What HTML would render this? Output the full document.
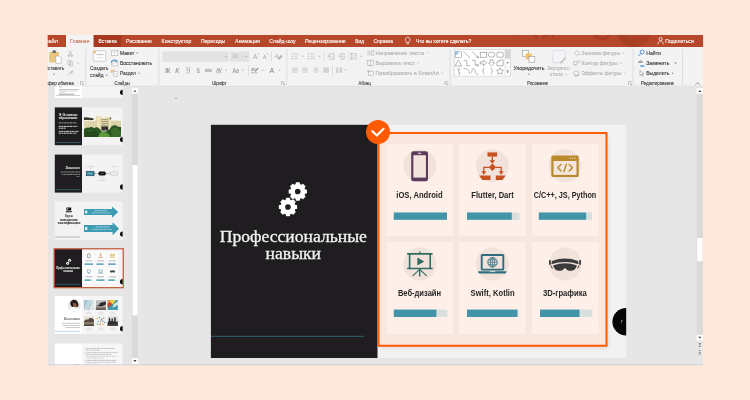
<!DOCTYPE html>
<html lang="ru">
<head>
<meta charset="utf-8">
<title>PowerPoint</title>
<style>
html,body{margin:0;padding:0;}
body{width:750px;height:400px;overflow:hidden;background:#FEE8DC;font-family:"Liberation Sans",sans-serif;}
svg{display:block;position:absolute;left:0;top:0;will-change:transform;}
text{white-space:pre;}
</style>
</head>
<body>
<svg width="750" height="400" viewBox="0 0 750 400">
<defs>
<clipPath id="win"><rect x="47.7" y="35" width="655.4" height="330.6"/></clipPath>
<clipPath id="tabbar"><rect x="47.7" y="35" width="655.4" height="12"/></clipPath>
<clipPath id="bigc"><circle cx="634" cy="29.5" r="17.6"/></clipPath>
<filter id="b3" x="-1%" y="-5%" width="102%" height="110%"><feGaussianBlur stdDeviation="0.28"/></filter>
<filter id="b4" x="-5%" y="-5%" width="110%" height="110%"><feGaussianBlur stdDeviation="0.35"/></filter>
<clipPath id="ph2"><rect x="83.7" y="116" width="37.5" height="21"/></clipPath>
<filter id="sh" x="-10%" y="-10%" width="120%" height="120%"><feGaussianBlur stdDeviation="2"/></filter>
</defs>
<g clip-path="url(#win)">
<rect x="47.00" y="35.00" width="657.00" height="331.00" fill="#E6E6E6" />
<rect x="47.00" y="35.00" width="657.00" height="12.00" fill="#B7472A" />
<g clip-path="url(#tabbar)">
<circle cx="602" cy="31.5" r="7.6" fill="none" stroke="#5a1500" stroke-width="3.2" opacity="0.16"/>
<circle cx="634" cy="29.5" r="17.6" fill="#5a1500" opacity="0.17"/>
<g clip-path="url(#bigc)" stroke="#B7472A" stroke-width="1.1" opacity="0.75">
<line x1="626.0" y1="33" x2="639.0" y2="48"/>
<line x1="629.3" y1="33" x2="642.3" y2="48"/>
<line x1="632.6" y1="33" x2="645.6" y2="48"/>
<line x1="635.9" y1="33" x2="648.9" y2="48"/>
<line x1="639.2" y1="33" x2="652.2" y2="48"/>
<line x1="642.5" y1="33" x2="655.5" y2="48"/>
<line x1="645.8" y1="33" x2="658.8" y2="48"/>
</g>
<path d="M535 35l2 3M543.5 35v3.600M546 35v3M552 35l1.600 2.600M514 35l1 2" stroke="#5a1500" stroke-width="1.6" opacity="0.22" fill="none"/>
</g>
<rect x="93.50" y="35.00" width="27.50" height="12.00" fill="#A6381F" />
<rect x="66.00" y="35.00" width="27.50" height="12.20" fill="#F3F3F3" />
<rect x="47.00" y="47.00" width="657.00" height="39.00" fill="#F3F3F3" />
<line x1="48.00" y1="86.10" x2="703.00" y2="86.10" stroke="#DADADA" stroke-width="0.6" />
<text x="44.00" y="42.94" font-family="Liberation Sans" font-size="5.4" font-weight="normal" font-style="normal" fill="#FFFFFF" textLength="14.00" lengthAdjust="spacingAndGlyphs"  stroke="#FFFFFF" stroke-width="0.12">Файл</text>
<text x="70.00" y="42.94" font-family="Liberation Sans" font-size="5.4" font-weight="normal" font-style="normal" fill="#BF5438" textLength="19.50" lengthAdjust="spacingAndGlyphs" stroke="none">Главная</text>
<text x="98.60" y="42.94" font-family="Liberation Sans" font-size="5.4" font-weight="normal" font-style="normal" fill="#FFFFFF" textLength="18.00" lengthAdjust="spacingAndGlyphs"  stroke="#FFFFFF" stroke-width="0.12">Вставка</text>
<text x="126.00" y="42.94" font-family="Liberation Sans" font-size="5.4" font-weight="normal" font-style="normal" fill="#FFFFFF" textLength="25.90" lengthAdjust="spacingAndGlyphs"  stroke="#FFFFFF" stroke-width="0.12">Рисование</text>
<text x="161.60" y="42.94" font-family="Liberation Sans" font-size="5.4" font-weight="normal" font-style="normal" fill="#FFFFFF" textLength="29.70" lengthAdjust="spacingAndGlyphs"  stroke="#FFFFFF" stroke-width="0.12">Конструктор</text>
<text x="200.70" y="42.94" font-family="Liberation Sans" font-size="5.4" font-weight="normal" font-style="normal" fill="#FFFFFF" textLength="24.60" lengthAdjust="spacingAndGlyphs"  stroke="#FFFFFF" stroke-width="0.12">Переходы</text>
<text x="235.10" y="42.94" font-family="Liberation Sans" font-size="5.4" font-weight="normal" font-style="normal" fill="#FFFFFF" textLength="24.90" lengthAdjust="spacingAndGlyphs"  stroke="#FFFFFF" stroke-width="0.12">Анимация</text>
<text x="269.30" y="42.94" font-family="Liberation Sans" font-size="5.4" font-weight="normal" font-style="normal" fill="#FFFFFF" textLength="26.30" lengthAdjust="spacingAndGlyphs"  stroke="#FFFFFF" stroke-width="0.12">Слайд-шоу</text>
<text x="304.90" y="42.94" font-family="Liberation Sans" font-size="5.4" font-weight="normal" font-style="normal" fill="#FFFFFF" textLength="40.90" lengthAdjust="spacingAndGlyphs"  stroke="#FFFFFF" stroke-width="0.12">Рецензирование</text>
<text x="355.20" y="42.94" font-family="Liberation Sans" font-size="5.4" font-weight="normal" font-style="normal" fill="#FFFFFF" textLength="8.80" lengthAdjust="spacingAndGlyphs"  stroke="#FFFFFF" stroke-width="0.12">Вид</text>
<text x="373.40" y="42.94" font-family="Liberation Sans" font-size="5.4" font-weight="normal" font-style="normal" fill="#FFFFFF" textLength="19.60" lengthAdjust="spacingAndGlyphs"  stroke="#FFFFFF" stroke-width="0.12">Справка</text>
<path d="M407.7 37.2a2.4 2.4 0 0 1 1.3 4.4v1.2h-2.6v-1.2a2.4 2.4 0 0 1 1.3-4.4zM406.6 43.9h2.2" fill="none" stroke="#FFFFFF" stroke-width="0.7" />
<text x="416.00" y="42.91" font-family="Liberation Sans" font-size="5.3" font-weight="normal" font-style="normal" fill="#FFFFFF" textLength="55.20" lengthAdjust="spacingAndGlyphs" stroke="#fff" stroke-width="0.15">Что вы хотите сделать?</text>
<path d="M660.6 37.4a1.6 1.6 0 1 1 0 3.2a1.6 1.6 0 1 1 0-3.2zM657.9 44.4c0-2.2 1.2-3.3 2.7-3.3s2.7 1.1 2.7 3.3" fill="none" stroke="#FFFFFF" stroke-width="0.7" />
<text x="665.30" y="42.94" font-family="Liberation Sans" font-size="5.4" font-weight="normal" font-style="normal" fill="#FFFFFF" textLength="28.40" lengthAdjust="spacingAndGlyphs"  stroke="#FFFFFF" stroke-width="0.12">Поделиться</text>
<g filter="url(#b3)">
<rect x="49.20" y="52.00" width="9.80" height="10.40" fill="#E9C67D" rx="0.8"/>
<rect x="52.20" y="50.80" width="4.00" height="2.20" fill="#707070" rx="0.7"/>
<rect x="53.30" y="50.10" width="1.80" height="1.30" fill="#707070" rx="0.5"/>
<path d="M55.8 56.000h3.600l1.800 1.800v5.600h-5.400z" fill="#fff" stroke="#9a9a9a" stroke-width="0.5" />
<text x="45.00" y="69.94" font-family="Liberation Sans" font-size="5.4" font-weight="normal" font-style="normal" fill="#383838" textLength="19.20" lengthAdjust="spacingAndGlyphs"  stroke="#383838" stroke-width="0.12">Вставить</text>
<path d="M52.90 73.65L55.10 73.65L54.00 74.97Z" fill="#666" stroke="none" stroke-width="1" />
<path d="M68.8 50.6l3 4.2M71.8 50.6l-3 4.2" fill="none" stroke="#ABABAB" stroke-width="0.6" />
<circle cx="68.9" cy="55.6" r="0.9" fill="none" stroke="#9a9a9a" stroke-width="0.6"/><circle cx="71.7" cy="55.6" r="0.9" fill="none" stroke="#9a9a9a" stroke-width="0.6"/>
<path d="M67.8 60.4h3v4h-3zM69.6 61.8h3v4h-3z" fill="#F3F3F3" stroke="#ABABAB" stroke-width="0.55" />
<path d="M77.20 62.70L79.20 62.70L78.20 63.90Z" fill="#B9B9B9" stroke="none" stroke-width="1" />
<path d="M68 75.2l2.6-2.6M70.2 72l1.4 1.4l1.3-2.1z" fill="none" stroke="#ABABAB" stroke-width="0.7" />
<text x="42.90" y="85.19" font-family="Liberation Sans" font-size="5.4" font-weight="normal" font-style="normal" fill="#3a3a3a" textLength="30.80" lengthAdjust="spacingAndGlyphs"  stroke="#3a3a3a" stroke-width="0.12">Буфер обмена</text>
<path d="M80.5 81.7H83.5M80.5 81.7V84.7" fill="none" stroke="#8a8a8a" stroke-width="0.5" />
<path d="M81.7 82.9L83.5 84.7M83.5 83.4V84.7H82.2" fill="none" stroke="#8a8a8a" stroke-width="0.5" />
<line x1="85.80" y1="49.00" x2="85.80" y2="85.00" stroke="#D4D4D4" stroke-width="0.7" />
<rect x="93.30" y="50.80" width="12.40" height="10.40" fill="#fff" stroke="#B5B5B5" stroke-width="0.6" rx="0.8"/>
<path d="M94.7 49.900l0.600 1.300l1.400 0.150l-1.050 0.950l0.300 1.400l-1.250-0.700l-1.250 0.700l0.300-1.400l-1.050-0.950l1.400-0.150z" fill="#F0B860" stroke="none" stroke-width="1" />
<line x1="96.20" y1="54.50" x2="103.60" y2="54.50" stroke="#C9C9C9" stroke-width="1.3" />
<line x1="97.00" y1="57.80" x2="102.80" y2="57.80" stroke="#DADADA" stroke-width="1.0" />
<text x="89.90" y="69.94" font-family="Liberation Sans" font-size="5.4" font-weight="normal" font-style="normal" fill="#383838" textLength="18.40" lengthAdjust="spacingAndGlyphs"  stroke="#383838" stroke-width="0.12">Создать</text>
<text x="90.30" y="76.84" font-family="Liberation Sans" font-size="5.4" font-weight="normal" font-style="normal" fill="#383838" textLength="13.10" lengthAdjust="spacingAndGlyphs"  stroke="#383838" stroke-width="0.12">слайд</text>
<path d="M105.60 74.70L107.60 74.70L106.60 75.90Z" fill="#666" stroke="none" stroke-width="1" />
<rect x="111.30" y="50.50" width="6.70" height="5.20" fill="#D2D2D2" stroke="#B5B5B5" stroke-width="0.4"/>
<rect x="112.00" y="52.40" width="2.40" height="2.60" fill="#fff" />
<rect x="115.00" y="52.40" width="2.30" height="2.60" fill="#fff" />
<rect x="112.00" y="51.10" width="5.30" height="0.80" fill="#F5F5F5" />
<text x="120.00" y="54.84" font-family="Liberation Sans" font-size="5.4" font-weight="normal" font-style="normal" fill="#383838" textLength="14.40" lengthAdjust="spacingAndGlyphs"  stroke="#383838" stroke-width="0.12">Макет</text>
<path d="M136.20 52.50L138.20 52.50L137.20 53.70Z" fill="#777" stroke="none" stroke-width="1" />
<rect x="111.60" y="60.40" width="6.40" height="5.60" fill="#DDDDDD" stroke="#BEBEBE" stroke-width="0.4"/>
<rect x="113.00" y="63.20" width="4.20" height="2.00" fill="#F8F8F8" />
<path d="M111.4 62.800c0-1.800 1.200-2.800 2.800-2.800c1.400 0 2.200 0.600 2.600 1.400" fill="none" stroke="#2F86C6" stroke-width="1.0" />
<path d="M116.000 60.000l1.200 1.600l-1.900 0.200z" fill="#2F86C6" stroke="none" stroke-width="1" />
<text x="120.00" y="64.69" font-family="Liberation Sans" font-size="5.4" font-weight="normal" font-style="normal" fill="#383838" textLength="32.00" lengthAdjust="spacingAndGlyphs"  stroke="#383838" stroke-width="0.12">Восстановить</text>
<rect x="113.20" y="71.40" width="4.60" height="5.20" fill="#fff" stroke="#B0B0B0" stroke-width="0.5"/>
<line x1="114.00" y1="73.40" x2="117.00" y2="73.40" stroke="#CFCFCF" stroke-width="0.6" />
<line x1="114.00" y1="75.00" x2="117.00" y2="75.00" stroke="#CFCFCF" stroke-width="0.6" />
<path d="M111.4 70.400h3.200M111.400 70.400v2.400" fill="none" stroke="#F0A848" stroke-width="0.9" />
<line x1="111.60" y1="72.20" x2="113.20" y2="72.20" stroke="#E58A6A" stroke-width="0.6" />
<text x="120.00" y="75.04" font-family="Liberation Sans" font-size="5.4" font-weight="normal" font-style="normal" fill="#383838" textLength="15.70" lengthAdjust="spacingAndGlyphs"  stroke="#383838" stroke-width="0.12">Раздел</text>
<path d="M138.20 72.70L140.20 72.70L139.20 73.90Z" fill="#777" stroke="none" stroke-width="1" />
<text x="114.50" y="85.19" font-family="Liberation Sans" font-size="5.4" font-weight="normal" font-style="normal" fill="#3a3a3a" textLength="15.20" lengthAdjust="spacingAndGlyphs"  stroke="#3a3a3a" stroke-width="0.12">Слайды</text>
<line x1="158.90" y1="49.00" x2="158.90" y2="85.00" stroke="#D4D4D4" stroke-width="0.7" />
<rect x="162.30" y="51.50" width="66.50" height="10.20" fill="#E2E2E2" />
<path d="M224.75 56.22L227.05 56.22L225.90 57.60Z" fill="#b0b0b0" stroke="none" stroke-width="1" />
<rect x="230.20" y="51.50" width="19.10" height="10.20" fill="#E2E2E2" />
<text x="232.20" y="58.44" font-family="Liberation Sans" font-size="5.4" font-weight="normal" font-style="normal" fill="#BDBDBD" textLength="6.20" lengthAdjust="spacingAndGlyphs"  stroke="#BDBDBD" stroke-width="0.12">20</text>
<path d="M245.15 56.22L247.45 56.22L246.30 57.60Z" fill="#a5a5a5" stroke="none" stroke-width="1" />
<text x="253.20" y="59.28" font-family="Liberation Sans" font-size="6.6" font-weight="normal" font-style="normal" fill="#ABABAB" textLength="4.00" lengthAdjust="spacingAndGlyphs"  stroke="#ABABAB" stroke-width="0.12">A</text>
<path d="M257.6 54.2l0.9-1.1l0.9 1.1z" fill="#ABABAB" stroke="none" stroke-width="1" />
<text x="263.00" y="59.29" font-family="Liberation Sans" font-size="5.8" font-weight="normal" font-style="normal" fill="#ABABAB" textLength="3.40" lengthAdjust="spacingAndGlyphs"  stroke="#ABABAB" stroke-width="0.12">A</text>
<path d="M266.9 53.4l0.8 1l0.8-1z" fill="#ABABAB" stroke="none" stroke-width="1" />
<line x1="271.50" y1="51.50" x2="271.50" y2="61.50" stroke="#D4D4D4" stroke-width="0.7" />
<text x="275.00" y="58.36" font-family="Liberation Sans" font-size="6" font-weight="normal" font-style="normal" fill="#ABABAB" textLength="3.60" lengthAdjust="spacingAndGlyphs"  stroke="#ABABAB" stroke-width="0.12">A</text>
<path d="M277.6 58.6l3.6-3.6l1.2 1.2l-3.6 3.6z" fill="#b5b5b5" stroke="#ABABAB" stroke-width="0.4" />
<text x="165.00" y="72.58" font-family="Liberation Sans" font-size="6.6" font-weight="bold" font-style="normal" fill="#979797" textLength="5.20" lengthAdjust="spacingAndGlyphs"  stroke="#979797" stroke-width="0.12">Ж</text>
<text x="175.20" y="72.58" font-family="Liberation Sans" font-size="6.6" font-weight="normal" font-style="italic" fill="#979797" textLength="4.00" lengthAdjust="spacingAndGlyphs"  stroke="#979797" stroke-width="0.12">К</text>
<text x="186.20" y="72.30" font-family="Liberation Sans" font-size="6.4" font-weight="normal" font-style="normal" fill="#979797" textLength="3.80" lengthAdjust="spacingAndGlyphs"  stroke="#979797" stroke-width="0.12">Ч</text>
<line x1="185.80" y1="72.90" x2="190.40" y2="72.90" stroke="#979797" stroke-width="0.5" />
<text x="196.60" y="72.58" font-family="Liberation Sans" font-size="6.6" font-weight="normal" font-style="normal" fill="#979797" textLength="3.40" lengthAdjust="spacingAndGlyphs"  stroke="#979797" stroke-width="0.12">S</text>
<text x="205.00" y="72.42" font-family="Liberation Sans" font-size="5.6" font-weight="normal" font-style="normal" fill="#a2a2a2" textLength="7.00" lengthAdjust="spacingAndGlyphs"  stroke="#a2a2a2" stroke-width="0.12">abc</text>
<line x1="204.60" y1="70.60" x2="212.40" y2="70.60" stroke="#a2a2a2" stroke-width="0.4" />
<text x="216.20" y="71.62" font-family="Liberation Sans" font-size="5.6" font-weight="normal" font-style="normal" fill="#979797" textLength="5.60" lengthAdjust="spacingAndGlyphs"  stroke="#979797" stroke-width="0.12">AV</text>
<line x1="216.00" y1="72.70" x2="222.00" y2="72.70" stroke="#979797" stroke-width="0.5" />
<path d="M224.85 69.83L227.15 69.83L226.00 71.21Z" fill="#B9B9B9" stroke="none" stroke-width="1" />
<text x="232.60" y="72.50" font-family="Liberation Sans" font-size="6.4" font-weight="normal" font-style="normal" fill="#979797" textLength="6.40" lengthAdjust="spacingAndGlyphs"  stroke="#979797" stroke-width="0.12">Aa</text>
<path d="M241.45 69.83L243.75 69.83L242.60 71.21Z" fill="#B9B9B9" stroke="none" stroke-width="1" />
<line x1="248.50" y1="65.00" x2="248.50" y2="75.50" stroke="#D4D4D4" stroke-width="0.7" />
<text x="251.00" y="70.60" font-family="Liberation Sans" font-size="5" font-weight="normal" font-style="normal" fill="#9a9a9a" textLength="4.40" lengthAdjust="spacingAndGlyphs"  stroke="#9a9a9a" stroke-width="0.12">ab</text>
<path d="M254.6 71l3-3.6l1.1 0.9l-3 3.6z" fill="#9a9a9a" stroke="none" stroke-width="1" />
<line x1="251.00" y1="72.80" x2="257.60" y2="72.80" stroke="#b0b0b0" stroke-width="0.9" />
<path d="M261.45 69.83L263.75 69.83L262.60 71.21Z" fill="#B9B9B9" stroke="none" stroke-width="1" />
<text x="269.40" y="72.59" font-family="Liberation Sans" font-size="7.2" font-weight="normal" font-style="normal" fill="#808080" textLength="4.80" lengthAdjust="spacingAndGlyphs" >A</text>
<path d="M278.45 69.83L280.75 69.83L279.60 71.21Z" fill="#B9B9B9" stroke="none" stroke-width="1" />
<text x="212.20" y="85.24" font-family="Liberation Sans" font-size="5.4" font-weight="normal" font-style="normal" fill="#3a3a3a" textLength="14.20" lengthAdjust="spacingAndGlyphs"  stroke="#3a3a3a" stroke-width="0.12">Шрифт</text>
<path d="M281.5 81.7H284.5M281.5 81.7V84.7" fill="none" stroke="#8a8a8a" stroke-width="0.5" />
<path d="M282.7 82.9L284.5 84.7M284.5 83.4V84.7H283.2" fill="none" stroke="#8a8a8a" stroke-width="0.5" />
<line x1="286.80" y1="49.00" x2="286.80" y2="85.00" stroke="#D4D4D4" stroke-width="0.7" />
<rect x="291.80" y="53.35" width="0.90" height="0.90" fill="#9a9a9a" />
<line x1="293.80" y1="53.80" x2="298.00" y2="53.80" stroke="#B9B9B9" stroke-width="0.6" />
<rect x="291.80" y="55.75" width="0.90" height="0.90" fill="#9a9a9a" />
<line x1="293.80" y1="56.20" x2="298.00" y2="56.20" stroke="#B9B9B9" stroke-width="0.6" />
<rect x="291.80" y="58.15" width="0.90" height="0.90" fill="#9a9a9a" />
<line x1="293.80" y1="58.60" x2="298.00" y2="58.60" stroke="#B9B9B9" stroke-width="0.6" />
<path d="M301.45 55.82L303.75 55.82L302.60 57.20Z" fill="#B9B9B9" stroke="none" stroke-width="1" />
<rect x="308.20" y="53.25" width="0.70" height="1.10" fill="#9a9a9a" />
<line x1="310.20" y1="53.80" x2="314.80" y2="53.80" stroke="#B9B9B9" stroke-width="0.6" />
<rect x="308.20" y="55.65" width="0.70" height="1.10" fill="#9a9a9a" />
<line x1="310.20" y1="56.20" x2="314.80" y2="56.20" stroke="#B9B9B9" stroke-width="0.6" />
<rect x="308.20" y="58.05" width="0.70" height="1.10" fill="#9a9a9a" />
<line x1="310.20" y1="58.60" x2="314.80" y2="58.60" stroke="#B9B9B9" stroke-width="0.6" />
<path d="M318.45 55.82L320.75 55.82L319.60 57.20Z" fill="#B9B9B9" stroke="none" stroke-width="1" />
<line x1="324.20" y1="51.50" x2="324.20" y2="61.50" stroke="#D4D4D4" stroke-width="0.7" />
<line x1="330.60" y1="54.00" x2="334.00" y2="54.00" stroke="#B9B9B9" stroke-width="0.6" />
<line x1="330.60" y1="56.20" x2="334.00" y2="56.20" stroke="#B9B9B9" stroke-width="0.6" />
<line x1="330.60" y1="58.40" x2="334.00" y2="58.40" stroke="#B9B9B9" stroke-width="0.6" />
<path d="M330 56.2h-2.2M328.8 55.2l-1 1l1 1" fill="none" stroke="#ABABAB" stroke-width="0.55" />
<rect x="329.80" y="53.20" width="4.60" height="6.00" fill="none" stroke="#b8b8b8" stroke-width="0.4"/>
<line x1="341.00" y1="54.00" x2="344.40" y2="54.00" stroke="#B9B9B9" stroke-width="0.6" />
<line x1="341.00" y1="56.20" x2="344.40" y2="56.20" stroke="#B9B9B9" stroke-width="0.6" />
<line x1="341.00" y1="58.40" x2="344.40" y2="58.40" stroke="#B9B9B9" stroke-width="0.6" />
<path d="M338.4 56.2h2.2M339.6 55.2l1 1l-1 1" fill="none" stroke="#ABABAB" stroke-width="0.55" />
<rect x="340.40" y="53.20" width="4.40" height="6.00" fill="none" stroke="#b8b8b8" stroke-width="0.4"/>
<line x1="349.00" y1="51.50" x2="349.00" y2="61.50" stroke="#D4D4D4" stroke-width="0.7" />
<line x1="353.80" y1="53.60" x2="357.40" y2="53.60" stroke="#B9B9B9" stroke-width="0.6" />
<line x1="353.80" y1="55.40" x2="357.40" y2="55.40" stroke="#B9B9B9" stroke-width="0.6" />
<line x1="353.80" y1="57.20" x2="357.40" y2="57.20" stroke="#B9B9B9" stroke-width="0.6" />
<line x1="353.80" y1="59.00" x2="357.40" y2="59.00" stroke="#B9B9B9" stroke-width="0.6" />
<path d="M351.8 53v6.6M351 54l0.8-1l0.8 1M351 58.6l0.8 1l0.8-1" fill="none" stroke="#8f8f8f" stroke-width="0.55" />
<path d="M359.85 55.82L362.15 55.82L361.00 57.20Z" fill="#B9B9B9" stroke="none" stroke-width="1" />
<line x1="292.00" y1="68.00" x2="297.60" y2="68.00" stroke="#B9B9B9" stroke-width="0.6" />
<line x1="292.00" y1="69.40" x2="297.60" y2="69.40" stroke="#B9B9B9" stroke-width="0.6" />
<line x1="292.00" y1="70.80" x2="297.60" y2="70.80" stroke="#B9B9B9" stroke-width="0.6" />
<line x1="292.00" y1="72.20" x2="297.60" y2="72.20" stroke="#B9B9B9" stroke-width="0.6" />
<line x1="302.00" y1="68.00" x2="308.00" y2="68.00" stroke="#B9B9B9" stroke-width="0.6" />
<line x1="302.00" y1="70.80" x2="308.00" y2="70.80" stroke="#B9B9B9" stroke-width="0.6" />
<line x1="303.00" y1="69.40" x2="307.00" y2="69.40" stroke="#B9B9B9" stroke-width="0.6" />
<line x1="303.00" y1="72.20" x2="307.00" y2="72.20" stroke="#B9B9B9" stroke-width="0.6" />
<line x1="313.00" y1="68.00" x2="318.20" y2="68.00" stroke="#B9B9B9" stroke-width="0.6" />
<line x1="313.00" y1="70.80" x2="318.20" y2="70.80" stroke="#B9B9B9" stroke-width="0.6" />
<line x1="314.60" y1="69.40" x2="318.20" y2="69.40" stroke="#B9B9B9" stroke-width="0.6" />
<line x1="314.60" y1="72.20" x2="318.20" y2="72.20" stroke="#B9B9B9" stroke-width="0.6" />
<rect x="323.20" y="67.40" width="5.80" height="5.40" fill="#D2D2D2" />
<line x1="332.50" y1="65.00" x2="332.50" y2="75.50" stroke="#D4D4D4" stroke-width="0.7" />
<rect x="336.00" y="67.40" width="2.60" height="5.40" fill="#D2D2D2" />
<rect x="339.60" y="67.40" width="2.60" height="5.40" fill="#D2D2D2" />
<path d="M344.45 69.83L346.75 69.83L345.60 71.21Z" fill="#B9B9B9" stroke="none" stroke-width="1" />
<path d="M368 50.4v5.2M369.8 50.4v5.2M371.6 50.4v5.2" fill="none" stroke="#a5a5a5" stroke-width="0.5" />
<path d="M372.6 51l0.8-0.9l0.8 0.9M372.6 55l0.8 0.9l0.8-0.9M373.4 50.2v5.6" fill="none" stroke="#a5a5a5" stroke-width="0.45" />
<text x="375.50" y="54.84" font-family="Liberation Sans" font-size="5.4" font-weight="normal" font-style="normal" fill="#B2B2B2" textLength="48.50" lengthAdjust="spacingAndGlyphs"  stroke="#B2B2B2" stroke-width="0.12">Направление текста</text>
<path d="M426.05 52.42L428.35 52.42L427.20 53.80Z" fill="#C4C4C4" stroke="none" stroke-width="1" />
<rect x="367.20" y="60.20" width="6.00" height="5.40" fill="none" stroke="#a5a5a5" stroke-width="0.5"/>
<path d="M370.2 59.4v7M369.4 61.2l0.8-0.9l0.8 0.9M369.4 64.6l0.8 0.9l0.8-0.9" fill="none" stroke="#a5a5a5" stroke-width="0.45" />
<text x="375.50" y="64.94" font-family="Liberation Sans" font-size="5.4" font-weight="normal" font-style="normal" fill="#B2B2B2" textLength="39.50" lengthAdjust="spacingAndGlyphs"  stroke="#B2B2B2" stroke-width="0.12">Выровнять текст</text>
<path d="M417.05 62.62L419.35 62.62L418.20 64.01Z" fill="#C4C4C4" stroke="none" stroke-width="1" />
<rect x="368.40" y="71.60" width="5.00" height="4.00" fill="none" stroke="#a5a5a5" stroke-width="0.5"/>
<path d="M367 70.6h3.2M367 72h2.2" fill="none" stroke="#a5a5a5" stroke-width="0.5" />
<text x="375.50" y="75.04" font-family="Liberation Sans" font-size="5.4" font-weight="normal" font-style="normal" fill="#B2B2B2" textLength="63.40" lengthAdjust="spacingAndGlyphs"  stroke="#B2B2B2" stroke-width="0.12">Преобразовать в SmartArt</text>
<path d="M441.05 72.62L443.35 72.62L442.20 74.01Z" fill="#C4C4C4" stroke="none" stroke-width="1" />
<text x="358.60" y="85.04" font-family="Liberation Sans" font-size="5.4" font-weight="normal" font-style="normal" fill="#3a3a3a" textLength="12.10" lengthAdjust="spacingAndGlyphs"  stroke="#3a3a3a" stroke-width="0.12">Абзац</text>
<path d="M444.8 81.7H447.8M444.8 81.7V84.7" fill="none" stroke="#8a8a8a" stroke-width="0.5" />
<path d="M446.0 82.9L447.8 84.7M447.8 83.4V84.7H446.5" fill="none" stroke="#8a8a8a" stroke-width="0.5" />
<line x1="450.00" y1="49.00" x2="450.00" y2="85.00" stroke="#D4D4D4" stroke-width="0.7" />
<rect x="454.30" y="49.60" width="56.20" height="26.50" fill="#fff" stroke="#CDCDCD" stroke-width="0.6"/>
<rect x="505.00" y="49.90" width="5.20" height="8.50" fill="#D6D6D6" />
<line x1="505.00" y1="49.60" x2="505.00" y2="76.10" stroke="#CDCDCD" stroke-width="0.5" />
<line x1="505.00" y1="58.50" x2="510.50" y2="58.50" stroke="#CDCDCD" stroke-width="0.5" />
<line x1="505.00" y1="67.20" x2="510.50" y2="67.20" stroke="#CDCDCD" stroke-width="0.5" />
<path d="M506.90 53.80L508.50 53.80L507.70 54.76Z" fill="#bdbdbd" stroke="none" stroke-width="1" />
<path d="M506.55 62.32L508.85 62.32L507.70 63.70Z" fill="#555" stroke="none" stroke-width="1" />
<line x1="506.60" y1="70.40" x2="508.80" y2="70.40" stroke="#555" stroke-width="0.5" />
<path d="M506.55 71.62L508.85 71.62L507.70 73.01Z" fill="#555" stroke="none" stroke-width="1" />
<rect x="455.40" y="51.80" width="6.20" height="5.80" fill="#fff" stroke="#8a8a8a" stroke-width="0.5"/>
<rect x="455.20" y="51.60" width="3.00" height="2.80" fill="#6FA8D8" />
<path d="M456 54l0.800-2l0.800 2" fill="none" stroke="#fff" stroke-width="0.4" />
<line x1="463.40" y1="51.60" x2="470.00" y2="57.80" stroke="#727272" stroke-width="0.5" />
<path d="M472 51.6l6.400 6.200M478.400 57.800l-2.100-0.500M478.400 57.800l-0.500-2.100" fill="none" stroke="#727272" stroke-width="0.5" />
<rect x="480.20" y="52.20" width="6.60" height="5.00" fill="none" stroke="#727272" stroke-width="0.5"/>
<ellipse cx="491.6" cy="54.7" rx="3.4" ry="2.5" fill="none" stroke="#727272" stroke-width="0.5"/>
<rect x="497.00" y="52.20" width="6.20" height="5.00" fill="none" stroke="#727272" stroke-width="0.5" rx="0.5"/>
<path d="M458.4 59.800l3.300 6.200h-6.600z" fill="none" stroke="#727272" stroke-width="0.5" />
<path d="M463.600 60.400h3.100v5.200h3.300" fill="none" stroke="#727272" stroke-width="0.5" />
<path d="M472.000 60.400h3.200v4.600h2.400M477.600 66.400l-1.000-1.500h2.000z" fill="none" stroke="#727272" stroke-width="0.5" />
<path d="M480.200 61.900h3.200v-1.700l3.300 2.700l-3.300 2.700v-1.700h-3.200z" fill="none" stroke="#727272" stroke-width="0.5" />
<path d="M490.200 59.800h2.800v3.200h1.700l-3.100 3.100l-3.100-3.100h1.700z" fill="none" stroke="#727272" stroke-width="0.5" />
<path d="M497.000 65.800v-4.200h2.200v-1.600h4.000v5.800z" fill="none" stroke="#727272" stroke-width="0.5" />
<path d="M457.200 68.200l2.200 1.800l-1.400 0.700l1.700 2.000M459.900 74.200l-0.300-1.900M459.900 74.200l-1.900-0.200M459.000 68.000l1.200 1.500" fill="none" stroke="#727272" stroke-width="0.5" />
<path d="M463.600 68.400c3.600 0 6.000 2.000 6.000 5.600" fill="none" stroke="#727272" stroke-width="0.5" />
<path d="M471.400 72.800c1.200-5.800 3.000-5.800 4.000-0.400c0.600 2.200 1.800 2.200 3.200 1.200" fill="none" stroke="#727272" stroke-width="0.5" />
<path d="M484.400 68.000c-1.400 0-1.000 1.800-1.000 2.400s-1.000 0.700-1.000 0.700s1.000 0.100 1.000 0.700s-0.400 2.400 1.000 2.400" fill="none" stroke="#727272" stroke-width="0.5" />
<path d="M490.600 68.000c1.400 0 1.000 1.800 1.000 2.400s1.000 0.700 1.000 0.700s-1.000 0.100-1.000 0.700s0.400 2.400-1.000 2.400" fill="none" stroke="#727272" stroke-width="0.5" />
<path d="M500.000 67.700l1.050 2.300l2.500 0.250l-1.850 1.700l0.550 2.450l-2.250-1.300l-2.250 1.300l0.550-2.450l-1.850-1.700l2.500-0.250z" fill="none" stroke="#727272" stroke-width="0.5" />
<rect x="522.40" y="50.40" width="5.80" height="5.80" fill="#fff" stroke="#8a8a8a" stroke-width="0.55"/>
<rect x="525.60" y="53.40" width="6.00" height="6.00" fill="#F0C36B" />
<rect x="529.00" y="56.60" width="5.80" height="5.60" fill="#fff" stroke="#8a8a8a" stroke-width="0.55"/>
<text x="513.40" y="69.64" font-family="Liberation Sans" font-size="5.4" font-weight="normal" font-style="normal" fill="#383838" textLength="31.10" lengthAdjust="spacingAndGlyphs"  stroke="#383838" stroke-width="0.12">Упорядочить</text>
<path d="M528.00 73.70L530.00 73.70L529.00 74.90Z" fill="#666" stroke="none" stroke-width="1" />
<path d="M554.4 50.4h9.4a1.6 1.6 0 0 1 1.6 1.6v6l-4.6 4.8h-6.4a1.6 1.6 0 0 1-1.6-1.6v-9.2a1.6 1.6 0 0 1 1.6-1.6z" fill="#F5F2F9" stroke="#D2D2D2" stroke-width="0.6"/>
<path d="M559.6 63l5.6-5.8l0.9 0.9l-4.6 5.4z" fill="#bdbdbd" stroke="none" stroke-width="1" />
<text x="546.90" y="69.64" font-family="Liberation Sans" font-size="5.4" font-weight="normal" font-style="normal" fill="#B2B2B2" textLength="23.50" lengthAdjust="spacingAndGlyphs"  stroke="#B2B2B2" stroke-width="0.12">Экспресс-</text>
<text x="549.80" y="76.44" font-family="Liberation Sans" font-size="5.4" font-weight="normal" font-style="normal" fill="#B2B2B2" textLength="12.90" lengthAdjust="spacingAndGlyphs"  stroke="#B2B2B2" stroke-width="0.12">стили</text>
<path d="M564.85 74.12L567.15 74.12L566.00 75.51Z" fill="#C4C4C4" stroke="none" stroke-width="1" />
<path d="M575 52.4l2.2-2l2.4 2.6l-2.6 2.4l-2.4-2.2zM579.6 53.6c0.8 1 0.8 1.6 0.2 2" fill="none" stroke="#a8a8a8" stroke-width="0.55" />
<text x="581.60" y="54.84" font-family="Liberation Sans" font-size="5.4" font-weight="normal" font-style="normal" fill="#B2B2B2" textLength="38.40" lengthAdjust="spacingAndGlyphs"  stroke="#B2B2B2" stroke-width="0.12">Заливка фигуры</text>
<path d="M622.15 52.52L624.45 52.52L623.30 53.91Z" fill="#C4C4C4" stroke="none" stroke-width="1" />
<path d="M573.6 61.4h4.2M573.6 61.4v3.6h3M575.4 64.6l3.8-4l0.8 0.8l-3.8 4z" fill="none" stroke="#a8a8a8" stroke-width="0.55" />
<text x="581.60" y="64.94" font-family="Liberation Sans" font-size="5.4" font-weight="normal" font-style="normal" fill="#B2B2B2" textLength="36.00" lengthAdjust="spacingAndGlyphs"  stroke="#B2B2B2" stroke-width="0.12">Контур фигуры</text>
<path d="M619.65 62.62L621.95 62.62L620.80 64.01Z" fill="#C4C4C4" stroke="none" stroke-width="1" />
<ellipse cx="576.4" cy="73.2" rx="2.6" ry="2.1" fill="none" stroke="#a8a8a8" stroke-width="0.55"/>
<path d="M574.4 75.4c1.6 1 3.6 0.6 4.8-0.8" fill="none" stroke="#979797" stroke-width="0.8" />
<text x="581.60" y="75.04" font-family="Liberation Sans" font-size="5.4" font-weight="normal" font-style="normal" fill="#B2B2B2" textLength="39.80" lengthAdjust="spacingAndGlyphs"  stroke="#B2B2B2" stroke-width="0.12">Эффекты фигуры</text>
<path d="M623.55 72.72L625.85 72.72L624.70 74.11Z" fill="#C4C4C4" stroke="none" stroke-width="1" />
<text x="527.20" y="85.04" font-family="Liberation Sans" font-size="5.4" font-weight="normal" font-style="normal" fill="#3a3a3a" textLength="21.00" lengthAdjust="spacingAndGlyphs"  stroke="#3a3a3a" stroke-width="0.12">Рисование</text>
<path d="M628.5 81.7H631.5M628.5 81.7V84.7" fill="none" stroke="#8a8a8a" stroke-width="0.5" />
<path d="M629.7 82.9L631.5 84.7M631.5 83.4V84.7H630.2" fill="none" stroke="#8a8a8a" stroke-width="0.5" />
<line x1="633.00" y1="49.00" x2="633.00" y2="85.00" stroke="#D4D4D4" stroke-width="0.7" />
<circle cx="642.2" cy="52" r="2" fill="none" stroke="#2B7CD3" stroke-width="0.75"/>
<line x1="640.80" y1="53.60" x2="638.60" y2="55.80" stroke="#2B7CD3" stroke-width="0.9" />
<text x="646.20" y="54.84" font-family="Liberation Sans" font-size="5.4" font-weight="normal" font-style="normal" fill="#383838" textLength="14.80" lengthAdjust="spacingAndGlyphs"  stroke="#383838" stroke-width="0.12">Найти</text>
<text x="638.40" y="62.91" font-family="Liberation Sans" font-size="4.2" font-weight="normal" font-style="normal" fill="#666" textLength="4.00" lengthAdjust="spacingAndGlyphs"  stroke="#666" stroke-width="0.12">ab</text>
<text x="640.40" y="66.91" font-family="Liberation Sans" font-size="4.2" font-weight="normal" font-style="normal" fill="#2B7CD3" textLength="4.00" lengthAdjust="spacingAndGlyphs"  stroke="#2B7CD3" stroke-width="0.12">ac</text>
<text x="646.20" y="64.94" font-family="Liberation Sans" font-size="5.4" font-weight="normal" font-style="normal" fill="#383838" textLength="23.20" lengthAdjust="spacingAndGlyphs"  stroke="#383838" stroke-width="0.12">Заменить</text>
<path d="M674.45 62.62L676.75 62.62L675.60 64.01Z" fill="#777" stroke="none" stroke-width="1" />
<path d="M640 70.4v5l1.3-1.1l1 2l0.8-0.4l-1-2h1.7z" fill="#fff" stroke="#777" stroke-width="0.5" />
<text x="646.20" y="75.04" font-family="Liberation Sans" font-size="5.4" font-weight="normal" font-style="normal" fill="#383838" textLength="23.20" lengthAdjust="spacingAndGlyphs"  stroke="#383838" stroke-width="0.12">Выделить</text>
<path d="M671.45 72.72L673.75 72.72L672.60 74.11Z" fill="#777" stroke="none" stroke-width="1" />
<text x="641.00" y="85.24" font-family="Liberation Sans" font-size="5.4" font-weight="normal" font-style="normal" fill="#3a3a3a" textLength="33.00" lengthAdjust="spacingAndGlyphs"  stroke="#3a3a3a" stroke-width="0.12">Редактирование</text>
<line x1="682.60" y1="49.00" x2="682.60" y2="85.00" stroke="#D4D4D4" stroke-width="0.7" />
<path d="M695.300 84.900l2.400-2.300l2.400 2.300" fill="none" stroke="#6a6a6a" stroke-width="0.7" />
</g>
</g>
<g clip-path="url(#win)">
<rect x="131.90" y="87.60" width="6.10" height="276.60" fill="#DADADA" />
<rect x="131.90" y="87.80" width="6.10" height="5.80" fill="#FDFDFD" />
<path d="M133.400 91.800l1.550-1.900l1.550 1.900z" fill="#4a4a4a" stroke="none" stroke-width="1" />
<rect x="132.60" y="165.00" width="5.00" height="150.40" fill="#FFFFFF" />
<rect x="131.90" y="358.00" width="6.10" height="6.00" fill="#FDFDFD" />
<path d="M133.400 360.000l1.550 1.900l1.550-1.900z" fill="#3a3a3a" stroke="none" stroke-width="1" />
<line x1="139.50" y1="86.50" x2="139.50" y2="365.00" stroke="#EDEDED" stroke-width="0.6" />
<rect x="54.80" y="86.30" width="27.20" height="11.70" fill="#FFFFFF" />
<rect x="82.00" y="86.30" width="40.60" height="11.70" fill="#F4F4F4" />
<line x1="59.00" y1="87.00" x2="62.00" y2="87.00" stroke="#999" stroke-width="0.5" />
<line x1="59.00" y1="89.50" x2="79.00" y2="89.50" stroke="#8a8a8a" stroke-width="0.5" />
<line x1="59.00" y1="91.00" x2="77.00" y2="91.00" stroke="#aaa" stroke-width="0.5" />
<line x1="59.00" y1="92.30" x2="65.00" y2="92.30" stroke="#aaa" stroke-width="0.5" />
<line x1="59.00" y1="94.20" x2="74.00" y2="94.20" stroke="#666" stroke-width="0.6" />
<line x1="56.00" y1="95.40" x2="80.00" y2="95.40" stroke="#9a9a9a" stroke-width="0.5" />
<path d="M122.60 89.70a2.6 2.6 0 0 0 0 5.2z" fill="#0a0a0a" stroke="none" stroke-width="1" />
<rect x="54.80" y="107.40" width="27.20" height="37.80" fill="#1F1D20" />
<rect x="82.00" y="107.40" width="40.60" height="37.80" fill="#F3F3F3" />
<text x="62.40" y="115.82" font-family="Liberation Serif" font-size="3.4" font-weight="bold" font-style="normal" fill="#f2f2f2" textLength="15.40" lengthAdjust="spacingAndGlyphs" >Основное</text>
<path d="M58.6 114.0l1.500-0.800l1.500 0.800l-1.500 0.800zM59.200 114.800v0.800h1.800v-0.800" fill="#f2f2f2" stroke="none" stroke-width="1" />
<text x="58.80" y="119.42" font-family="Liberation Serif" font-size="3.4" font-weight="bold" font-style="normal" fill="#f2f2f2" textLength="19.00" lengthAdjust="spacingAndGlyphs" >образование</text>
<line x1="58.80" y1="122.90" x2="76.50" y2="122.90" stroke="#a9a9a9" stroke-width="0.9" stroke-dasharray="2.3 0.45 1.5 0.45 3.1 0.45 1.9 0.45 2.7 0.45 1.2 0.45"/>
<line x1="58.80" y1="126.40" x2="77.50" y2="126.40" stroke="#eeeeee" stroke-width="0.85" stroke-dasharray="2.3 0.45 1.5 0.45 3.1 0.45 1.9 0.45 2.7 0.45 1.2 0.45"/>
<line x1="58.80" y1="128.20" x2="66.00" y2="128.20" stroke="#eeeeee" stroke-width="0.85" stroke-dasharray="1.2 0.45 2.7 0.45 1.9 0.45 3.1 0.45 1.5 0.45 2.3 0.45"/>
<line x1="58.80" y1="131.40" x2="78.50" y2="131.40" stroke="#e4e4e4" stroke-width="0.85" stroke-dasharray="1.2 0.45 2.7 0.45 1.9 0.45 3.1 0.45 1.5 0.45 2.3 0.45"/>
<line x1="58.80" y1="133.20" x2="76.50" y2="133.20" stroke="#e4e4e4" stroke-width="0.85" stroke-dasharray="2.3 0.45 1.5 0.45 3.1 0.45 1.9 0.45 2.7 0.45 1.2 0.45"/>
<line x1="55.60" y1="142.50" x2="80.80" y2="142.50" stroke="#3C7D8C" stroke-width="0.6" />
<g filter="url(#b4)"><g clip-path="url(#ph2)">
<rect x="83.70" y="116.00" width="37.50" height="21.00" fill="#F7F7F5" />
<path d="M83.7 117.6c2-0.600 4.600-0.400 6 0.200c1.600-0.200 3 0.200 3.800 0.800v1.400h-9.800z" fill="#3a4032" stroke="none" stroke-width="1" />
<rect x="83.70" y="120.60" width="12.90" height="9.40" fill="#E9DFB4" />
<rect x="110.80" y="120.40" width="10.40" height="9.60" fill="#E6DBB0" />
<rect x="96.20" y="116.20" width="4.80" height="13.80" fill="#EFE4B8" />
<rect x="101.00" y="117.60" width="9.80" height="12.40" fill="#EADFB2" />
<rect x="104.60" y="116.80" width="4.80" height="1.20" fill="#E9DEB0" />
<rect x="109.60" y="117.40" width="1.60" height="2.00" fill="#6a5a52" />
<line x1="101.60" y1="119.60" x2="108.60" y2="119.60" stroke="#8b8468" stroke-width="0.8" />
<line x1="101.60" y1="121.50" x2="108.60" y2="121.50" stroke="#8b8468" stroke-width="0.8" />
<line x1="101.60" y1="123.40" x2="108.60" y2="123.40" stroke="#8b8468" stroke-width="0.8" />
<line x1="101.60" y1="125.30" x2="108.60" y2="125.30" stroke="#8b8468" stroke-width="0.8" />
<line x1="84.60" y1="122.20" x2="95.60" y2="122.20" stroke="#9a936f" stroke-width="0.55" stroke-dasharray="0.9 0.8"/>
<line x1="111.60" y1="122.20" x2="120.60" y2="122.20" stroke="#9a936f" stroke-width="0.55" stroke-dasharray="0.9 0.8"/>
<line x1="84.60" y1="124.20" x2="95.60" y2="124.20" stroke="#9a936f" stroke-width="0.55" stroke-dasharray="0.9 0.8"/>
<line x1="111.60" y1="124.20" x2="120.60" y2="124.20" stroke="#9a936f" stroke-width="0.55" stroke-dasharray="0.9 0.8"/>
<line x1="84.60" y1="126.20" x2="95.60" y2="126.20" stroke="#9a936f" stroke-width="0.55" stroke-dasharray="0.9 0.8"/>
<line x1="111.60" y1="126.20" x2="120.60" y2="126.20" stroke="#9a936f" stroke-width="0.55" stroke-dasharray="0.9 0.8"/>
<line x1="96.20" y1="116.20" x2="96.20" y2="129.00" stroke="#b9ae86" stroke-width="0.5" />
<line x1="101.00" y1="116.60" x2="101.00" y2="129.00" stroke="#b9ae86" stroke-width="0.5" />
<rect x="101.40" y="126.40" width="6.80" height="4.20" fill="#34302e" />
<rect x="104.60" y="129.60" width="1.60" height="1.60" fill="#8f8fa0" />
<path d="M83.7 129.600c1.400-1.800 3.400-2.400 5-1.800c1.800-1.200 4-1 5.400 0.400c1.600-1.400 3.800-1.200 5 0.400c1.200 1 2.200 2.200 2.800 3.200c1.400-0.800 3-0.800 4.200 0c0.800-1.400 2.200-2.200 3.600-2.200c0.600-2.400 2.400-4.200 4.600-4.400c1.600-0.200 3 0.600 3.800 1.800c1.200-0.600 2.400-0.400 3.100 0.200v10.400h-37.500z" fill="#2C5520" stroke="none" stroke-width="1" />
<path d="M85 133c1.600-2.400 5-2.800 7-1c1.600-1.600 4.200-1.400 5.400 0.400l1 4.600h-14z" fill="#264A1C" stroke="none" stroke-width="1" />
<path d="M99.500 133.400c2-1.600 5.200-1.800 7.400-0.400c1.800 1 3 2.400 3.400 4h-12.200z" fill="#5C9A38" stroke="none" stroke-width="1" />
<path d="M111 130c1.800-2.200 5.200-2.600 7.400-0.800c1.400 1.200 2.400 2.800 2.800 4.400v3.400h-9.600z" fill="#3A6D29" stroke="none" stroke-width="1" />
<path d="M88 131.200c1.200-0.800 2.600-0.800 3.600 0M114 128.600c1.200-0.800 2.600-0.600 3.400 0.200" fill="none" stroke="#4F8534" stroke-width="0.7" />
<circle cx="116.60" cy="133.20" r="0.45" fill="#9a4a8a" />
<circle cx="118.40" cy="134.20" r="0.40" fill="#b05a4a" />
<circle cx="89.40" cy="134.60" r="0.40" fill="#b0703a" />
</g></g>
<path d="M122.60 137.00a2.6 2.6 0 0 0 0 5.2z" fill="#0a0a0a" stroke="none" stroke-width="1" />
<rect x="54.80" y="154.60" width="27.20" height="38.00" fill="#1F1D20" />
<rect x="82.00" y="154.60" width="40.60" height="38.00" fill="#F3F3F3" />
<text x="65.40" y="169.30" font-family="Liberation Serif" font-size="3.6" font-weight="bold" font-style="italic" fill="#f4f4f4" textLength="14.60" lengthAdjust="spacingAndGlyphs" >Вакансия</text>
<line x1="60.60" y1="172.00" x2="80.00" y2="172.00" stroke="#b9b9b9" stroke-width="0.7" stroke-dasharray="2.3 0.45 1.5 0.45 3.1 0.45 1.9 0.45 2.7 0.45 1.2 0.45"/>
<line x1="62.00" y1="174.40" x2="80.00" y2="174.40" stroke="#b9b9b9" stroke-width="0.7" stroke-dasharray="1.2 0.45 2.7 0.45 1.9 0.45 3.1 0.45 1.5 0.45 2.3 0.45"/>
<line x1="76.60" y1="176.50" x2="79.60" y2="176.50" stroke="#9a9a9a" stroke-width="0.6" />
<line x1="55.60" y1="189.60" x2="80.80" y2="189.60" stroke="#3C7D8C" stroke-width="0.6" />
<line x1="86.40" y1="166.40" x2="94.60" y2="166.40" stroke="#c2c2c2" stroke-width="0.5" />
<line x1="90.60" y1="166.40" x2="90.60" y2="166.40" stroke="#c2c2c2" stroke-width="0.5" />
<line x1="90.60" y1="166.60" x2="90.60" y2="171.40" stroke="#bdbdbd" stroke-width="0.4" />
<line x1="110.40" y1="166.40" x2="118.20" y2="166.40" stroke="#d0d0d0" stroke-width="0.5" />
<line x1="114.30" y1="166.60" x2="114.30" y2="171.40" stroke="#d0d0d0" stroke-width="0.4" />
<line x1="98.40" y1="180.40" x2="106.40" y2="180.40" stroke="#c2c2c2" stroke-width="0.5" />
<line x1="102.20" y1="175.80" x2="102.20" y2="180.20" stroke="#bdbdbd" stroke-width="0.4" />
<line x1="94.40" y1="173.60" x2="98.20" y2="173.60" stroke="#8a8a8a" stroke-width="0.4" />
<line x1="106.00" y1="173.60" x2="110.60" y2="173.60" stroke="#8a8a8a" stroke-width="0.4" />
<rect x="86.30" y="171.50" width="7.70" height="4.20" fill="#3A8DA3" stroke="#1f4a56" stroke-width="0.7"/>
<path d="M94.300 172.800l1.100 0.800l-1.100 0.800z" fill="#1f4a56" stroke="none" stroke-width="1" />
<path d="M99.4 171.6h5.4l1.4 2l-1.4 2h-5.4l-1.4-2z" fill="#141414" stroke="none" stroke-width="1" />
<rect x="110.70" y="171.60" width="7.30" height="4.00" fill="#E2E2E2" stroke="#cfcfcf" stroke-width="0.4"/>
<line x1="87.60" y1="173.60" x2="92.60" y2="173.60" stroke="#bfe3ec" stroke-width="0.5" />
<line x1="100.20" y1="173.60" x2="104.20" y2="173.60" stroke="#777" stroke-width="0.5" />
<line x1="112.00" y1="173.60" x2="116.80" y2="173.60" stroke="#f8f8f8" stroke-width="0.6" />
<path d="M122.60 184.30a2.6 2.6 0 0 0 0 5.2z" fill="#0a0a0a" stroke="none" stroke-width="1" />
<rect x="54.80" y="201.50" width="67.80" height="38.30" fill="#F3F3F3" />
<path d="M66.4 207.4h4.8v3.2h-4.8zM65.8 211.2h6v1h-6z" fill="#111" stroke="none" stroke-width="1" />
<path d="M67.2 208.2l1.6 0l-1.6 1.6z" fill="#f3f3f3" stroke="none" stroke-width="1" />
<text x="65.00" y="216.93" font-family="Liberation Serif" font-size="3.7" font-weight="bold" font-style="normal" fill="#1a1a1a" textLength="7.80" lengthAdjust="spacingAndGlyphs" >Курсы</text>
<text x="60.20" y="220.53" font-family="Liberation Serif" font-size="3.7" font-weight="bold" font-style="normal" fill="#1a1a1a" textLength="17.40" lengthAdjust="spacingAndGlyphs" >повышения</text>
<text x="57.80" y="224.13" font-family="Liberation Serif" font-size="3.7" font-weight="bold" font-style="normal" fill="#1a1a1a" textLength="22.60" lengthAdjust="spacingAndGlyphs" >квалификации</text>
<line x1="55.20" y1="237.00" x2="80.00" y2="237.00" stroke="#B5B5B5" stroke-width="1.0" />
<path d="M84 209h28v-2.6l6.2 5.7l-6.2 5.7v-2.8h-28z" fill="#3D9BB2" stroke="none" stroke-width="1" />
<path d="M84 225h28.6v-2.8l6.4 6.5l-6.4 6.5v-3.2h-28.6z" fill="#3D9BB2" stroke="none" stroke-width="1" />
<rect x="85.00" y="210.60" width="2.40" height="2.80" fill="#d9eef3" />
<rect x="85.00" y="227.00" width="2.40" height="3.00" fill="#d9eef3" />
<line x1="94.80" y1="210.70" x2="107.00" y2="210.70" stroke="#d4edf3" stroke-width="0.7" stroke-dasharray="2.3 0.45 1.5 0.45 3.1 0.45 1.9 0.45 2.7 0.45 1.2 0.45"/>
<line x1="91.40" y1="212.90" x2="110.40" y2="212.90" stroke="#bfe3ec" stroke-width="0.7" stroke-dasharray="1.2 0.45 2.7 0.45 1.9 0.45 3.1 0.45 1.5 0.45 2.3 0.45"/>
<line x1="95.60" y1="226.90" x2="109.60" y2="226.90" stroke="#d4edf3" stroke-width="0.7" stroke-dasharray="2.3 0.45 1.5 0.45 3.1 0.45 1.9 0.45 2.7 0.45 1.2 0.45"/>
<line x1="91.40" y1="229.30" x2="112.00" y2="229.30" stroke="#bfe3ec" stroke-width="0.7" stroke-dasharray="1.2 0.45 2.7 0.45 1.9 0.45 3.1 0.45 1.5 0.45 2.3 0.45"/>
<path d="M122.60 231.40a2.6 2.6 0 0 0 0 5.2z" fill="#0a0a0a" stroke="none" stroke-width="1" />
<rect x="53.50" y="248.10" width="70.40" height="40.20" fill="#C65E40" />
<rect x="54.80" y="249.40" width="27.20" height="37.60" fill="#1F1D20" />
<rect x="82.00" y="249.40" width="40.60" height="37.60" fill="#F4F4F4" />
<circle cx="69.60" cy="260.20" r="1.50" fill="#f4f4f4" />
<circle cx="67.60" cy="263.20" r="1.50" fill="#f4f4f4" />
<circle cx="69.60" cy="260.20" r="0.50" fill="#1F1D20" />
<circle cx="67.60" cy="263.20" r="0.50" fill="#1F1D20" />
<text x="56.20" y="268.86" font-family="Liberation Serif" font-size="3.5" font-weight="bold" font-style="normal" fill="#f4f4f4" textLength="23.80" lengthAdjust="spacingAndGlyphs" >Профессиональные</text>
<text x="63.60" y="272.06" font-family="Liberation Serif" font-size="3.5" font-weight="bold" font-style="normal" fill="#f4f4f4" textLength="9.40" lengthAdjust="spacingAndGlyphs" >навыки</text>
<line x1="55.40" y1="284.30" x2="80.40" y2="284.30" stroke="#3C8294" stroke-width="0.6" />
<rect x="83.40" y="251.40" width="10.80" height="15.20" fill="#FCFCFC" />
<rect x="83.40" y="267.60" width="10.80" height="15.80" fill="#FCFCFC" />
<line x1="85.20" y1="260.90" x2="92.40" y2="260.90" stroke="#9a9a9a" stroke-width="0.7" />
<line x1="84.60" y1="264.20" x2="93.00" y2="264.20" stroke="#D5DEDF" stroke-width="1.2" />
<line x1="85.20" y1="276.80" x2="92.40" y2="276.80" stroke="#9a9a9a" stroke-width="0.7" />
<line x1="84.60" y1="280.20" x2="93.00" y2="280.20" stroke="#D5DEDF" stroke-width="1.2" />
<rect x="95.20" y="251.40" width="10.80" height="15.20" fill="#FCFCFC" />
<rect x="95.20" y="267.60" width="10.80" height="15.80" fill="#FCFCFC" />
<line x1="97.00" y1="260.90" x2="104.20" y2="260.90" stroke="#9a9a9a" stroke-width="0.7" />
<line x1="96.40" y1="264.20" x2="104.80" y2="264.20" stroke="#D5DEDF" stroke-width="1.2" />
<line x1="97.00" y1="276.80" x2="104.20" y2="276.80" stroke="#9a9a9a" stroke-width="0.7" />
<line x1="96.40" y1="280.20" x2="104.80" y2="280.20" stroke="#D5DEDF" stroke-width="1.2" />
<rect x="107.00" y="251.40" width="10.80" height="15.20" fill="#FCFCFC" />
<rect x="107.00" y="267.60" width="10.80" height="15.80" fill="#FCFCFC" />
<line x1="108.80" y1="260.90" x2="116.00" y2="260.90" stroke="#9a9a9a" stroke-width="0.7" />
<line x1="108.20" y1="264.20" x2="116.60" y2="264.20" stroke="#D5DEDF" stroke-width="1.2" />
<line x1="108.80" y1="276.80" x2="116.00" y2="276.80" stroke="#9a9a9a" stroke-width="0.7" />
<line x1="108.20" y1="280.20" x2="116.60" y2="280.20" stroke="#D5DEDF" stroke-width="1.2" />
<line x1="84.60" y1="264.20" x2="93.00" y2="264.20" stroke="#3F96AC" stroke-width="1.2" />
<line x1="96.40" y1="264.20" x2="103.60" y2="264.20" stroke="#3F96AC" stroke-width="1.2" />
<line x1="108.20" y1="264.20" x2="115.60" y2="264.20" stroke="#3F96AC" stroke-width="1.2" />
<line x1="84.60" y1="280.20" x2="90.60" y2="280.20" stroke="#3F96AC" stroke-width="1.2" />
<line x1="96.40" y1="280.20" x2="104.60" y2="280.20" stroke="#3F96AC" stroke-width="1.2" />
<line x1="108.20" y1="280.20" x2="114.60" y2="280.20" stroke="#3F96AC" stroke-width="1.2" />
<rect x="87.50" y="253.80" width="2.60" height="4.10" fill="#F4F4F4" stroke="#6a5a6a" stroke-width="0.5" rx="0.4"/>
<path d="M100.600 254.200v1.200M99.000 257.200h3.200M99.200 256.200l1.400-0.800l1.400 0.800" fill="none" stroke="#D98A5B" stroke-width="0.6" />
<rect x="99.90" y="253.40" width="1.40" height="1.00" fill="#D98A5B" />
<rect x="98.60" y="257.00" width="1.50" height="0.90" fill="#E0A27C" />
<rect x="101.10" y="257.00" width="1.50" height="0.90" fill="#E0A27C" />
<rect x="110.20" y="254.20" width="4.40" height="3.50" fill="#F8EDCB" stroke="#CFAE5E" stroke-width="0.5"/>
<line x1="110.20" y1="255.10" x2="114.60" y2="255.10" stroke="#CFAE5E" stroke-width="0.6" />
<rect x="87.30" y="269.90" width="3.20" height="2.50" fill="#EEF3F4" stroke="#6f98a3" stroke-width="0.5"/>
<path d="M88.100 274.000l0.800-1.400l0.800 1.400" fill="none" stroke="#6f98a3" stroke-width="0.45" />
<rect x="98.90" y="269.90" width="3.50" height="2.60" fill="#DCEBEF" stroke="#6f9fac" stroke-width="0.5"/>
<line x1="98.20" y1="273.30" x2="103.10" y2="273.30" stroke="#6f9fac" stroke-width="0.55" />
<path d="M109.800 270.800c1.800-0.800 3.800-0.800 5.400 0l-0.350 1.500c-0.700 0.700-1.400 0.500-1.750 0h-1.200c-0.350 0.500-1.050 0.700-1.750 0z" fill="#4a4a4a" stroke="none" stroke-width="1" />
<path d="M122.60 279.10a2.6 2.6 0 0 0 0 5.2z" fill="#0a0a0a" stroke="none" stroke-width="1" />
<rect x="54.80" y="296.00" width="27.20" height="38.00" fill="#FFFFFF" />
<rect x="82.00" y="296.00" width="40.60" height="38.00" fill="#F5F5F5" />
<g filter="url(#b4)">
<circle cx="74.20" cy="305.60" r="6.10" fill="#E9E9E9" stroke="#dcdcdc" stroke-width="0.5"/>
<path d="M71.200 301.000c2.200-2.000 5.800-1.400 6.600 1.400c0.800 1.600 0.800 3.200 0.200 4.200c-1.200 1.400-3.600 1.800-5.200 0.800c-2.400-1.400-3.400-4.400-1.600-6.400z" fill="#2a1f1b" stroke="none" stroke-width="1" />
<path d="M73.000 303.400c1.400-0.900 3.200-0.200 3.600 1.600l0.200 2.000c-0.900 1.000-2.400 1.000-3.200 0.300z" fill="#8a5a44" stroke="none" stroke-width="1" />
<path d="M69.600 310.400c0.600-2.200 2.400-3.400 4.000-3.600l3.000 0.600c1.800 0.800 2.600 2.000 2.800 3.200c-2.800 1.600-7.000 1.600-9.800-0.200z" fill="#FCFCFC" stroke="none" stroke-width="1" />
</g>
<text x="64.00" y="320.14" font-family="Liberation Serif" font-size="4" font-weight="normal" font-style="italic" fill="#2a2a2a" textLength="16.00" lengthAdjust="spacingAndGlyphs" >Выставки</text>
<line x1="62.00" y1="323.30" x2="80.00" y2="323.30" stroke="#8a8a8a" stroke-width="0.5" />
<line x1="62.40" y1="325.50" x2="80.00" y2="325.50" stroke="#9a9a9a" stroke-width="0.5" />
<line x1="65.20" y1="327.50" x2="80.00" y2="327.50" stroke="#9a9a9a" stroke-width="0.5" />
<line x1="55.00" y1="331.30" x2="80.40" y2="331.30" stroke="#8DC3D0" stroke-width="0.6" />
<g filter="url(#b4)">
<rect x="84.00" y="300.20" width="9.90" height="9.70" fill="#BFD5DE" />
<path d="M87.6 309.9c0.4-4 2-7.4 5-9.700h1.300v9.700z" fill="#DDE7E6" stroke="none" stroke-width="1" />
<path d="M88.6 309.9c0.600-3.400 2-6.200 4.200-8.200" fill="none" stroke="#7fa6b6" stroke-width="0.7" />
<path d="M84 300.2h4.2c-1.800 2-3 4.400-3.400 7l-0.800 0.400z" fill="#9CC3D4" stroke="none" stroke-width="1" />
<rect x="95.90" y="300.20" width="10.00" height="9.70" fill="#B9BBBD" />
<path d="M95.9 306.2l3-1.200l1.400-2.200l5.600-1.200v3l-3.600 1.600h-6.400z" fill="#2b2b2d" stroke="none" stroke-width="1" />
<rect x="95.90" y="306.60" width="10.00" height="3.30" fill="#8a8378" />
<rect x="95.90" y="308.40" width="10.00" height="1.50" fill="#5d574f" />
<rect x="107.70" y="300.20" width="10.10" height="9.70" fill="#3F95A6" />
<path d="M107.700 300.200h6.400l-1.200 3.200l-5.200 3.600z" fill="#E8952A" stroke="none" stroke-width="1" />
<path d="M110.400 300.200h5.200l-2.200 3.600l-3.800 0.800z" fill="#F4CE4A" stroke="none" stroke-width="1" />
<path d="M107.7 303.600l3.400-1.400l0.800 2.200l-4.200 3z" fill="#C73D2A" stroke="none" stroke-width="1" />
<path d="M113.4 304.400l4.400-3.200v3.800l-5.200 3z" fill="#D9E6E0" stroke="none" stroke-width="1" />
<rect x="84.00" y="316.30" width="9.90" height="9.60" fill="#E6E0D6" />
<rect x="84.00" y="321.00" width="9.90" height="4.90" fill="#8a7866" />
<path d="M84 321.200l2-1.600h2.400l1-1.600h2.400l2.100 1.600v2.400h-9.900z" fill="#5a4c42" stroke="none" stroke-width="1" />
<rect x="84.00" y="324.60" width="9.90" height="1.30" fill="#3d3834" />
<rect x="95.90" y="316.30" width="10.00" height="9.60" fill="#F6F6F4" />
<circle cx="97.20" cy="318.60" r="0.75" fill="#E9A53A" />
<circle cx="99.40" cy="317.60" r="0.75" fill="#4FA3C4" />
<circle cx="101.80" cy="319.00" r="0.75" fill="#D9534A" />
<circle cx="103.80" cy="318.00" r="0.75" fill="#6CB36A" />
<circle cx="98.20" cy="321.40" r="0.75" fill="#4FA3C4" />
<circle cx="100.60" cy="322.00" r="0.75" fill="#E9A53A" />
<circle cx="102.80" cy="321.20" r="0.75" fill="#7C6BC0" />
<circle cx="104.60" cy="322.60" r="0.75" fill="#4FA3C4" />
<circle cx="97.40" cy="324.00" r="0.75" fill="#6CB36A" />
<circle cx="100.00" cy="324.60" r="0.75" fill="#D9534A" />
<circle cx="103.00" cy="324.20" r="0.75" fill="#E9A53A" />
<circle cx="101.00" cy="320.00" r="0.75" fill="#4FA3C4" />
<rect x="107.70" y="316.30" width="10.10" height="9.60" fill="#D9DBDC" />
<path d="M107.7 322l1-0.400v-2.600l0.800-1.400l0.800 1.400v2.200l1.200-0.200v-1.800l0.700-1.200l0.700 1.200v2l1.200 0.200v-3l0.800-1.600l0.800 1.600v3l1.300 0.400l0.800-0.600v4.700h-10.100z" fill="#2d2d30" stroke="none" stroke-width="1" />
<rect x="107.70" y="324.20" width="10.10" height="1.70" fill="#4a4640" />
</g>
<line x1="86.75" y1="312.20" x2="91.15" y2="312.20" stroke="#bdbdbd" stroke-width="0.5" />
<line x1="85.95" y1="313.90" x2="91.95" y2="313.90" stroke="#cfcfcf" stroke-width="0.5" />
<line x1="86.75" y1="328.10" x2="91.15" y2="328.10" stroke="#bdbdbd" stroke-width="0.5" />
<line x1="85.95" y1="329.80" x2="91.95" y2="329.80" stroke="#cfcfcf" stroke-width="0.5" />
<line x1="98.70" y1="312.20" x2="103.10" y2="312.20" stroke="#bdbdbd" stroke-width="0.5" />
<line x1="97.90" y1="313.90" x2="103.90" y2="313.90" stroke="#cfcfcf" stroke-width="0.5" />
<line x1="98.70" y1="328.10" x2="103.10" y2="328.10" stroke="#bdbdbd" stroke-width="0.5" />
<line x1="97.90" y1="329.80" x2="103.90" y2="329.80" stroke="#cfcfcf" stroke-width="0.5" />
<line x1="110.55" y1="312.20" x2="114.95" y2="312.20" stroke="#bdbdbd" stroke-width="0.5" />
<line x1="109.75" y1="313.90" x2="115.75" y2="313.90" stroke="#cfcfcf" stroke-width="0.5" />
<line x1="110.55" y1="328.10" x2="114.95" y2="328.10" stroke="#bdbdbd" stroke-width="0.5" />
<line x1="109.75" y1="329.80" x2="115.75" y2="329.80" stroke="#cfcfcf" stroke-width="0.5" />
<path d="M122.60 326.10a2.6 2.6 0 0 0 0 5.2z" fill="#0a0a0a" stroke="none" stroke-width="1" />
<rect x="54.80" y="343.50" width="27.20" height="38.00" fill="#FFFFFF" />
<rect x="82.00" y="343.50" width="40.60" height="38.00" fill="#F6F6F6" />
<line x1="85.80" y1="348.50" x2="114.00" y2="348.50" stroke="#a2a2a2" stroke-width="0.65" stroke-dasharray="2.3 0.45 1.5 0.45 3.1 0.45 1.9 0.45 2.7 0.45 1.2 0.45"/>
<line x1="85.80" y1="350.30" x2="100.00" y2="350.30" stroke="#b0b0b0" stroke-width="0.65" stroke-dasharray="2.3 0.45 1.5 0.45 3.1 0.45 1.9 0.45 2.7 0.45 1.2 0.45"/>
<line x1="85.80" y1="352.60" x2="118.00" y2="352.60" stroke="#adadad" stroke-width="0.65" stroke-dasharray="1.2 0.45 2.7 0.45 1.9 0.45 3.1 0.45 1.5 0.45 2.3 0.45"/>
<line x1="85.80" y1="354.50" x2="112.00" y2="354.50" stroke="#b0b0b0" stroke-width="0.65" stroke-dasharray="2.3 0.45 1.5 0.45 3.1 0.45 1.9 0.45 2.7 0.45 1.2 0.45"/>
<line x1="85.80" y1="356.30" x2="117.00" y2="356.30" stroke="#c2c2c2" stroke-width="0.65" stroke-dasharray="2.3 0.45 1.5 0.45 3.1 0.45 1.9 0.45 2.7 0.45 1.2 0.45"/>
<line x1="85.80" y1="358.00" x2="104.00" y2="358.00" stroke="#c6c6c6" stroke-width="0.65" stroke-dasharray="1.2 0.45 2.7 0.45 1.9 0.45 3.1 0.45 1.5 0.45 2.3 0.45"/>
<line x1="85.80" y1="360.40" x2="116.60" y2="360.40" stroke="#a2a2a2" stroke-width="0.65" stroke-dasharray="1.2 0.45 2.7 0.45 1.9 0.45 3.1 0.45 1.5 0.45 2.3 0.45"/>
<line x1="85.80" y1="362.30" x2="116.00" y2="362.30" stroke="#b8b8b8" stroke-width="0.65" stroke-dasharray="2.3 0.45 1.5 0.45 3.1 0.45 1.9 0.45 2.7 0.45 1.2 0.45"/>
<line x1="85.80" y1="364.00" x2="98.00" y2="364.00" stroke="#c8c8c8" stroke-width="0.65" stroke-dasharray="1.2 0.45 2.7 0.45 1.9 0.45 3.1 0.45 1.5 0.45 2.3 0.45"/>
<circle cx="84.40" cy="348.50" r="0.35" fill="#9a9a9a" />
<circle cx="84.40" cy="352.60" r="0.35" fill="#9a9a9a" />
<circle cx="84.40" cy="360.40" r="0.35" fill="#9a9a9a" />
<rect x="74.20" y="364.00" width="5.40" height="0.60" fill="#8a8a8a" />
</g>
<g clip-path="url(#win)">
<rect x="696.60" y="87.60" width="6.60" height="252.90" fill="#DADADA" />
<rect x="696.60" y="87.90" width="6.60" height="5.90" fill="#FDFDFD" />
<path d="M698.300 91.900l1.550 -1.900l1.550 1.900z" fill="#4a4a4a" stroke="none" stroke-width="1" />
<rect x="697.20" y="238.00" width="5.40" height="23.20" fill="#FFFFFF" />
<rect x="696.60" y="334.80" width="6.60" height="5.70" fill="#FDFDFD" />
<path d="M698.300 336.700l1.550 1.900l1.550 -1.900z" fill="#3a3a3a" stroke="none" stroke-width="1" />
<path d="M698.7 345.3l1.100 -1.000l1.100 1.000zM698.700 347.000l1.100 -1.000l1.100 1.000z" fill="#555" stroke="none" stroke-width="1" />
<line x1="698.50" y1="343.50" x2="701.10" y2="343.50" stroke="#555" stroke-width="0.55" />
<path d="M698.7 350.300l1.100 1.000l1.100 -1.000zM698.700 352.000l1.100 1.000l1.100 -1.000z" fill="#555" stroke="none" stroke-width="1" />
<line x1="698.50" y1="353.90" x2="701.10" y2="353.90" stroke="#555" stroke-width="0.55" />
<line x1="48.00" y1="364.90" x2="703.00" y2="364.90" stroke="#D2D2D2" stroke-width="1.2" />
<circle cx="176.00" cy="98.50" r="0.55" fill="#555" />
<rect x="210.90" y="124.80" width="415.30" height="233.20" fill="#F2F2F2" />
<rect x="210.90" y="124.80" width="166.60" height="233.20" fill="#1F1D20" />
<path d="M304.59 189.81L306.28 190.09L306.28 192.91L304.59 193.19L303.80 195.11L304.80 196.50L302.80 198.50L301.41 197.50L299.49 198.29L299.21 199.98L296.39 199.98L296.11 198.29L294.19 197.50L292.80 198.50L290.80 196.50L291.80 195.11L291.01 193.19L289.32 192.91L289.32 190.09L291.01 189.81L291.80 187.89L290.80 186.50L292.80 184.50L294.19 185.50L296.11 184.71L296.39 183.02L299.21 183.02L299.49 184.71L301.41 185.50L302.80 184.50L304.80 186.50L303.80 187.89ZM301.30 191.50a3.5 3.5 0 1 0 -7.00 0a3.5 3.5 0 1 0 7.00 0Z" fill="#FFFFFF" fill-rule="evenodd" stroke="#FFFFFF" stroke-width="1.3" stroke-linejoin="round"/>
<path d="M294.79 205.31L296.48 205.59L296.48 208.41L294.79 208.69L294.00 210.61L295.00 212.00L293.00 214.00L291.61 213.00L289.69 213.79L289.41 215.48L286.59 215.48L286.31 213.79L284.39 213.00L283.00 214.00L281.00 212.00L282.00 210.61L281.21 208.69L279.52 208.41L279.52 205.59L281.21 205.31L282.00 203.39L281.00 202.00L283.00 200.00L284.39 201.00L286.31 200.21L286.59 198.52L289.41 198.52L289.69 200.21L291.61 201.00L293.00 200.00L295.00 202.00L294.00 203.39ZM291.50 207.00a3.5 3.5 0 1 0 -7.00 0a3.5 3.5 0 1 0 7.00 0Z" fill="#FFFFFF" fill-rule="evenodd" stroke="#FFFFFF" stroke-width="1.3" stroke-linejoin="round"/>
<text x="219.70" y="242.30" font-family="Liberation Serif" font-size="16.5" font-weight="normal" font-style="normal" fill="#F2F2F2" textLength="147.20" lengthAdjust="spacingAndGlyphs" stroke="#F2F2F2" stroke-width="0.3">Профессиональные</text>
<text x="265.60" y="258.70" font-family="Liberation Serif" font-size="16.5" font-weight="normal" font-style="normal" fill="#F2F2F2" textLength="55.40" lengthAdjust="spacingAndGlyphs" stroke="#F2F2F2" stroke-width="0.3">навыки</text>
<line x1="211.00" y1="336.30" x2="364.00" y2="336.30" stroke="#3F8191" stroke-width="0.7" />
<rect x="380" y="136" width="228" height="212" fill="#000" opacity="0.10" filter="url(#sh)"/>
<rect x="378.50" y="133.00" width="228.00" height="212.75" fill="#F8E7DF" stroke="#FF5A00" stroke-width="2"/>
<rect x="386.55" y="143.80" width="66.60" height="92.20" fill="#FEF0E8" />
<circle cx="419.75" cy="165.80" r="16.50" fill="#F1E3DC" />
<rect x="459.20" y="143.80" width="66.60" height="92.20" fill="#FEF0E8" />
<circle cx="492.40" cy="165.80" r="16.50" fill="#F1E3DC" />
<rect x="531.85" y="143.80" width="66.60" height="92.20" fill="#FEF0E8" />
<circle cx="565.05" cy="165.80" r="16.50" fill="#F1E3DC" />
<rect x="386.55" y="242.00" width="66.60" height="92.00" fill="#FEF0E8" />
<circle cx="419.75" cy="264.00" r="16.50" fill="#F1E3DC" />
<rect x="459.20" y="242.00" width="66.60" height="92.00" fill="#FEF0E8" />
<circle cx="492.40" cy="264.00" r="16.50" fill="#F1E3DC" />
<rect x="531.85" y="242.00" width="66.60" height="92.00" fill="#FEF0E8" />
<circle cx="565.05" cy="264.00" r="16.50" fill="#F1E3DC" />
<text x="396.30" y="198.00" font-family="Liberation Sans" font-size="8.5" font-weight="bold" font-style="normal" fill="#262626" textLength="46.30" lengthAdjust="spacingAndGlyphs" >iOS, Android</text>
<text x="471.30" y="198.00" font-family="Liberation Sans" font-size="8.5" font-weight="bold" font-style="normal" fill="#262626" textLength="42.50" lengthAdjust="spacingAndGlyphs" >Flutter, Dart</text>
<text x="533.80" y="198.00" font-family="Liberation Sans" font-size="8.5" font-weight="bold" font-style="normal" fill="#262626" textLength="62.50" lengthAdjust="spacingAndGlyphs" >C/C++, JS, Python</text>
<text x="397.90" y="295.70" font-family="Liberation Sans" font-size="8.5" font-weight="bold" font-style="normal" fill="#262626" textLength="43.10" lengthAdjust="spacingAndGlyphs" >Веб-дизайн</text>
<text x="470.60" y="295.80" font-family="Liberation Sans" font-size="8.5" font-weight="bold" font-style="normal" fill="#262626" textLength="44.00" lengthAdjust="spacingAndGlyphs" >Swift, Kotlin</text>
<text x="542.90" y="295.70" font-family="Liberation Sans" font-size="8.5" font-weight="bold" font-style="normal" fill="#262626" textLength="44.00" lengthAdjust="spacingAndGlyphs" >3D-графика</text>
<rect x="393.80" y="212.50" width="53.20" height="7.30" fill="#D7DFDF" />
<rect x="393.80" y="212.50" width="53.20" height="7.30" fill="#4294A8" />
<rect x="467.00" y="212.50" width="52.50" height="7.30" fill="#D7DFDF" />
<rect x="467.00" y="212.50" width="44.80" height="7.30" fill="#4294A8" />
<rect x="538.80" y="212.50" width="53.20" height="7.30" fill="#D7DFDF" />
<rect x="538.80" y="212.50" width="47.40" height="7.30" fill="#4294A8" />
<rect x="393.80" y="309.60" width="53.60" height="7.40" fill="#D7DFDF" />
<rect x="393.80" y="309.60" width="42.60" height="7.40" fill="#4294A8" />
<rect x="467.00" y="309.60" width="51.80" height="7.40" fill="#D7DFDF" />
<rect x="467.00" y="309.60" width="50.40" height="7.40" fill="#4294A8" />
<rect x="540.00" y="309.60" width="52.40" height="7.40" fill="#D7DFDF" />
<rect x="540.00" y="309.60" width="39.50" height="7.40" fill="#4294A8" />
<rect x="411.2" y="151.3" width="16.8" height="30" rx="2.2" fill="#5C3A5C"/>
<rect x="413.40" y="155.20" width="12.50" height="22.40" fill="#F3E5DE" />
<rect x="417.8" y="152.7" width="3.6" height="1.1" rx="0.55" fill="#F3E5DE"/>
<rect x="487.50" y="152.40" width="9.60" height="4.20" fill="#C5521F" />
<line x1="492.30" y1="156.40" x2="492.30" y2="161.60" stroke="#C5521F" stroke-width="1.3" />
<path d="M490.1 160.3l2.200 2.900l2.200 -2.900" fill="#C5521F" stroke="#C5521F" stroke-width="1.0" stroke-linejoin="miter"/>
<path d="M492.4 163.6l3.700 3.700l-3.700 3.700l-3.700 -3.700z" fill="#C5521F" stroke="none" stroke-width="1" />
<path d="M489.0 167.3h-5.200v5.600M495.800 167.3h5.400v5.600" fill="none" stroke="#C5521F" stroke-width="1.3" />
<path d="M481.6 171.600l2.200 2.900l2.200 -2.900zM499.000 171.600l2.200 2.900l2.200 -2.900z" fill="#C5521F" stroke="#C5521F" stroke-width="0.4" />
<path d="M479.0 175.500h11.500v4.600h-8.200z" fill="#C5521F" stroke="none" stroke-width="1" />
<path d="M495.800 175.500h10.000l-3.300 4.600h-6.700z" fill="#C5521F" stroke="none" stroke-width="1" />
<rect x="551.3" y="155.5" width="27.4" height="21.5" rx="1.6" fill="#B98A2C"/>
<rect x="553.50" y="161.00" width="23.00" height="13.90" fill="#F4E6DE" />
<circle cx="570.20" cy="158.20" r="0.62" fill="#F4E6DE" />
<circle cx="572.60" cy="158.20" r="0.62" fill="#F4E6DE" />
<circle cx="575.00" cy="158.20" r="0.62" fill="#F4E6DE" />
<path d="M561.0 164.6l-3.300 3.200l3.300 3.200M569.200 164.600l3.300 3.200l-3.300 3.200M566.300 164.200l-2.400 7.400" fill="none" stroke="#B98A2C" stroke-width="1.45" stroke-linecap="round" stroke-linejoin="round"/>
<path d="M407.2 253.8h25.4M407.2 268.5h25.4" fill="none" stroke="#2F6B62" stroke-width="1.7" />
<path d="M409.6 253.8v14.700M430.200 253.8v14.700" fill="none" stroke="#2F6B62" stroke-width="1.6" />
<path d="M417.4 257.400v8.200l6.800 -4.100z" fill="#2F6B62" stroke="none" stroke-width="1" />
<path d="M419.700 269v7.600" fill="none" stroke="#2F6B62" stroke-width="1.4" />
<path d="M419.700 269.400l-7.000 6.500M419.700 269.400l7.000 6.500" fill="none" stroke="#2F6B62" stroke-width="1.15" />
<line x1="419.80" y1="251.40" x2="419.80" y2="253.40" stroke="#2F6B62" stroke-width="1.4" />
<rect x="481.7" y="255.0" width="21.6" height="14.6" rx="0.6" fill="none" stroke="#2E6D7E" stroke-width="1.9"/>
<path d="M478.0 271.200h28.600c0 1.500 -1 2.400 -2.600 2.400h-23.400c-1.600 0 -2.600 -0.900 -2.600 -2.400z" fill="#2E6D7E" stroke="none" stroke-width="1" />
<rect x="489.80" y="271.20" width="5.40" height="0.90" fill="#EADFD9" />
<circle cx="492.5" cy="262.3" r="4.7" fill="none" stroke="#2E6D7E" stroke-width="0.9"/>
<ellipse cx="492.5" cy="262.3" rx="2.1" ry="4.7" fill="none" stroke="#2E6D7E" stroke-width="0.75"/>
<path d="M487.800 262.300h9.400M492.500 257.600v9.400M488.600 259.900h7.800M488.600 264.700h7.800" fill="none" stroke="#2E6D7E" stroke-width="0.7" />
<path d="M552.0 260.9Q565 256.300 578.000 260.900L578.700 264.300Q565 259.500 551.300 264.300Z" fill="#3A3A3A" stroke="none" stroke-width="1" />
<path d="M553.0 265.600Q565 260.700 577.000 265.600L575.800 268.000Q574.600 270.700 571.600 270.700L569.200 270.700Q567.200 270.700 566.300 269.100Q565 267.300 563.700 269.100Q562.800 270.700 560.800 270.700L558.400 270.700Q555.400 270.700 554.200 268.000Z" fill="#3A3A3A" stroke="none" stroke-width="1" />
<rect x="549.0" y="260.0" width="1.8" height="4.8" rx="0.6" fill="#3A3A3A"/>
<rect x="579.2" y="260.0" width="1.8" height="4.8" rx="0.6" fill="#3A3A3A"/>
<path d="M551.000 265.800l1.200 2.300M579.000 265.800l-1.200 2.300" fill="none" stroke="#3A3A3A" stroke-width="1.0" stroke-linecap="round"/>
<circle cx="378.00" cy="132.00" r="12.00" fill="#FF5A00" />
<path d="M372.4 131.200l4.500 4.300l6.600 -6.700" fill="none" stroke="#FFFFFF" stroke-width="2.2" stroke-linecap="round" stroke-linejoin="round"/>
<path d="M626.2 308.0a13.8 13.8 0 0 0 0 27.6z" fill="#050505" stroke="none" stroke-width="1" />
<text x="620.60" y="323.35" font-family="Liberation Sans" font-size="3.2" font-weight="normal" font-style="italic" fill="#cfcfcf" textLength="2.00" lengthAdjust="spacingAndGlyphs"  stroke="#cfcfcf" stroke-width="0.12">7</text>
</g>
</svg>
</body>
</html>
